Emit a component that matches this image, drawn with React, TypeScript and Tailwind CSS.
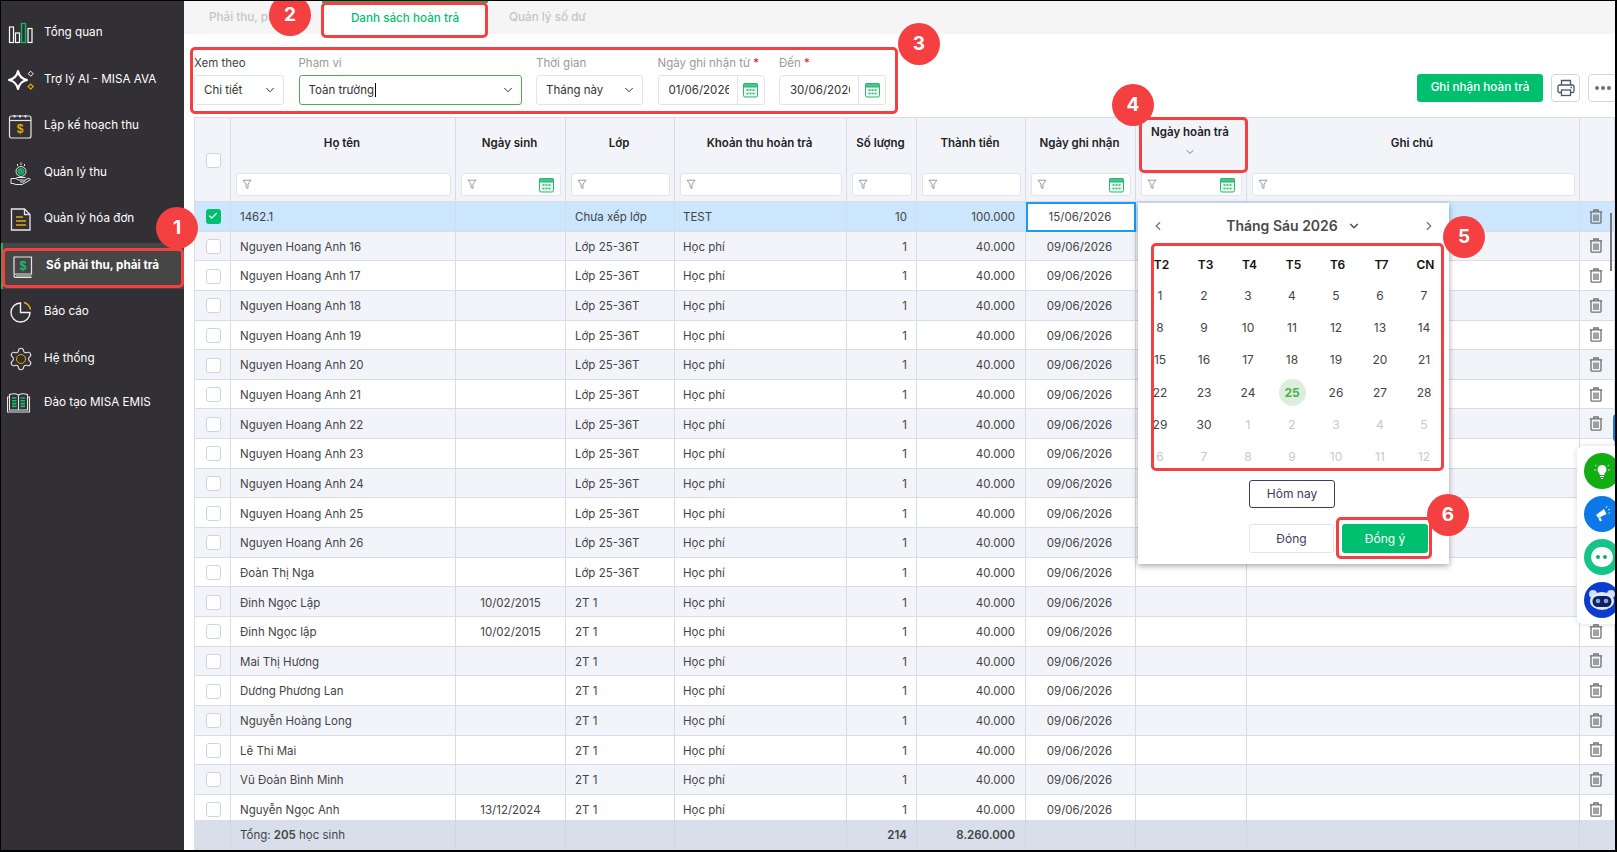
import { Check, ChevronDown, ChevronLeft, ChevronRight, Settings } from 'lucide-react';

const COLS = 'grid grid-cols-[36px_225px_110px_109px_172px_70px_109px_110px_111px_333px_35px]';
const CELL = 'border-r border-b border-[#d8dbe8] flex items-center min-w-0 overflow-hidden whitespace-nowrap';

const names16 = [16, 17, 18, 19, 20, 21, 22, 23, 24, 25, 26].map((n) => ({
  name: `Nguyen Hoang Anh ${n}`, dob: '', cls: 'Lớp 25-36T',
}));

const ROWS = [
  ...names16,
  { name: 'Đoàn Thị Nga', dob: '', cls: 'Lớp 25-36T' },
  { name: 'Đinh Ngọc Lập', dob: '10/02/2015', cls: '2T 1' },
  { name: 'Đinh Ngọc lập', dob: '10/02/2015', cls: '2T 1' },
  { name: 'Mai Thị Hương', dob: '', cls: '2T 1' },
  { name: 'Dương Phương Lan', dob: '', cls: '2T 1' },
  { name: 'Nguyễn Hoàng Long', dob: '', cls: '2T 1' },
  { name: 'Lê Thi Mai', dob: '', cls: '2T 1' },
  { name: 'Vũ Đoàn Bình Minh', dob: '', cls: '2T 1' },
  { name: 'Nguyễn Ngọc Anh', dob: '13/12/2024', cls: '2T 1' },
];

const CalIcon = () => (
  <svg width="17" height="16" viewBox="0 0 17 16" fill="none" stroke="#2bb673" strokeWidth="1">
    <rect x="1.5" y="1.5" width="14" height="13.5" rx="1.5" fill="#e9f8f0" />
    <rect x="1.5" y="1.5" width="14" height="3.5" rx="1" fill="#4cc48a" />
    <path d="M4.5 8h2M7.5 8h2M10.5 8h2M4.500 11.500h2M7.500 11.500h2M10.500 11.500h2" strokeWidth="1.300" />
  </svg>
);

const Funnel = () => (
  <svg width="10" height="11" viewBox="0 0 10 11" fill="none" stroke="#8a8f99" strokeWidth="0.9" className="shrink-0">
    <path d="M1 1.2h8L6 5v4.5L4 8.3V5z" />
  </svg>
);

const Trash = () => (
  <svg width="14" height="15" viewBox="0 0 14 15" fill="none" stroke="#707070" strokeWidth="1.300">
    <path d="M0.8 2.8h12.400M4.800 2.600V1h4.400v1.600" />
    <path d="M2 2.800v10.400a1 1 0 0 0 1 1h8a1 1 0 0 0 1-1V2.800" />
    <path d="M5 5.500v6.500M7 5.500v6.500M9 5.500v6.500" />
  </svg>
);

const FilterBox = ({ cal }: { cal?: boolean }) => (
  <div className="h-[23px] w-full bg-white border border-[#e2e4ec] rounded-[3px] flex items-center justify-between pl-[5px] pr-[5px]">
    <Funnel />
    {cal && <CalIcon />}
  </div>
);

const Field = ({ label, req, w, children, muted }: { label: string; req?: boolean; w: string; children: React.ReactNode; muted?: boolean }) => (
  <div className={`${w} shrink-0 flex flex-col`}>
    <div className={`text-[11.5px] leading-[16px] mb-[4px] whitespace-nowrap ${muted ? 'text-[#9a9a9a]' : 'text-[#444]'}`}>
      {label}{req && <span className="text-[#e02020]"> *</span>}
    </div>
    {children}
  </div>
);

const SelectBox = ({ text, green, caret }: { text: string; green?: boolean; caret?: boolean }) => (
  <div className={`h-[30px] rounded-[3px] border bg-white flex items-center justify-between pl-[9px] pr-[6px] ${green ? 'border-[#4caf50]' : 'border-[#e2e4ec]'}`}>
    <span className="text-[11.5px] text-[#333] whitespace-nowrap pt-px">{text}{caret && <span className="border-l border-black ml-px" />}</span>
    <ChevronDown size={14} strokeWidth={1.7} className="text-[#333]" />
  </div>
);

const DateBox = ({ text }: { text: string }) => (
  <div className="h-[30px] rounded-[3px] border border-[#e2e4ec] bg-white flex items-center">
    <span className="flex-1 min-w-0 overflow-hidden ml-[10px] mr-[8px] pt-px text-[11.5px] text-[#333] whitespace-nowrap">{text}</span>
    <div className="w-[27px] h-full border-l border-[#e2e4ec] flex items-center justify-center shrink-0"><CalIcon /></div>
  </div>
);

const Bars = () => (
  <svg width="30" height="30" viewBox="0 0 30 30" fill="none" stroke="#fff" strokeWidth="1.200">
    <rect x="2.500" y="9" width="4" height="15.500" />
    <rect x="8.500" y="15" width="4" height="9.500" />
    <rect x="14.500" y="5.500" width="4" height="19" stroke="#18b26b" strokeWidth="1.400" />
    <rect x="21" y="10.500" width="4" height="14" />
  </svg>
);

const Spark = () => (
  <svg width="30" height="30" viewBox="0 0 30 30" fill="none">
    <path d="M11 6c1 5 3.500 7.700 9 9-5.500 1.300-8 4-9 9-1-5-3.500-7.700-9-9 5.500-1.300 8-4 9-9z" stroke="#fff" strokeWidth="2.200" strokeLinejoin="round" />
    <path d="M23.700 6.200l2.500 2.500-2.500 2.500-2.500-2.500z" stroke="#fff" strokeWidth="1" />
    <path d="M23.700 19.100l2.500 2.500-2.500 2.500-2.500-2.500z" stroke="#e0a800" strokeWidth="1.300" />
  </svg>
);

const PlanCal = () => (
  <svg width="30" height="30" viewBox="0 0 30 30" fill="none" stroke="#e6e6e6" strokeWidth="1.200">
    <rect x="2.500" y="5" width="21.500" height="22" rx="2" />
    <path d="M2.500 9.500h21.500" />
    <path d="M7.500 4v2.500M13 4v2.500M18.500 4v2.500" strokeWidth="1.800" />
    <text x="13.200" y="22" fontSize="12" fontWeight="700" fill="#e5ac00" stroke="none" textAnchor="middle" fontFamily="Liberation Sans, sans-serif">$</text>
  </svg>
);

const HandCoin = () => (
  <svg width="30" height="30" viewBox="0 0 30 30" fill="none" stroke="#e6e6e6" strokeWidth="1">
    <circle cx="14" cy="13.500" r="5" />
    <circle cx="14" cy="13.500" r="3.600" fill="#18a564" stroke="none" />
    <path d="M14 4.500v2.500M10.500 6v2M17.500 6v2" />
    <path d="M4 20.500h5l2.500 1.500h5c1.200 0 1.200 2 0 2h-3.500M4 20.500v5h2l3 1h6l8-4.500c1-1-0.500-2-2-1.500l-4 2" />
    <path d="M9.500 19.500h9" />
  </svg>
);

const Doc = () => (
  <svg width="30" height="30" viewBox="0 0 30 30" fill="none" stroke="#e6e6e6" strokeWidth="1.300">
    <path d="M4.500 5h13l5.500 5.500v15.500H4.500z" />
    <path d="M17.500 5v5.500h5.500" />
    <path d="M9 13h7M9 17h10M9 21h10" stroke="#e5ac00" strokeWidth="1.400" />
  </svg>
);

const Ledger = () => (
  <svg width="30" height="30" viewBox="0 0 30 30" fill="none" stroke="#e6e6e6" strokeWidth="1.200">
    <path d="M5 23V6h17.500v17H7c-2.700 0-2.700 3.500 0 3.500h15.500" />
    <path d="M7 25h15.500" strokeWidth="1" />
    <text x="14" y="19" fontSize="12" fontWeight="700" fill="#16c172" stroke="none" textAnchor="middle" fontFamily="Liberation Sans, sans-serif">$</text>
  </svg>
);

const Pie = () => (
  <svg width="30" height="30" viewBox="0 0 30 30" fill="none" stroke="#f0f0f0" strokeWidth="1.400">
    <path d="M13.500 6a9.500 9.500 0 1 0 9.500 9.500h-9.500z" />
    <path d="M17 5.500a9.500 9.500 0 0 1 6.500 7" stroke="#e5ac00" strokeWidth="1.400" />
  </svg>
);

const Gear = () => (
  <div className="relative w-[30px] h-[30px] -ml-[1px] flex items-center justify-center">
    <Settings size={26} strokeWidth={1} className="text-[#e6e6e6]" />
    <span className="absolute w-[10px] h-[10px] rounded-full border-[1.5px] border-[#e5ac00] bg-[#323034]" />
  </div>
);

const OpenBook = () => (
  <svg width="30" height="30" viewBox="0 0 30 30" fill="none" stroke="#e6e6e6" strokeWidth="1.100">
    <path d="M2.500 6.500c3-1 6.500-1 9 0.500 2.500-1.500 6-1.500 9-0.500v15.500h-18zM11.500 7v15M2.500 9H0.500v15h22V9h-2" />
    <path d="M5 10h4.500M5 12.800h4.500M5 15.600h4.500M5 18.400h4.500M13.500 10h4.500M13.500 12.800h4.500M13.500 15.600h4.500M13.500 18.400h4.500" stroke="#16c172" strokeWidth="1.600" />
  </svg>
);

const NAV = [
  { t: 'Tổng quan', i: <Bars /> },
  { t: 'Trợ lý AI - MISA AVA', i: <Spark /> },
  { t: 'Lập kế hoạch thu', i: <PlanCal /> },
  { t: 'Quản lý thu', i: <HandCoin /> },
  { t: 'Quản lý hóa đơn', i: <Doc /> },
  { t: 'Sổ phải thu, phải trả', i: <Ledger />, active: true },
  { t: 'Báo cáo', i: <Pie /> },
  { t: 'Hệ thống', i: <Gear /> },
  { t: 'Đào tạo MISA EMIS', i: <OpenBook /> },
];

const Circle = ({ n, pos }: { n: number; pos: string }) => (
  <div className={`absolute w-[42px] h-[42px] rounded-full bg-[#f44040] text-white font-bold text-[19px] flex items-center justify-center z-30 ${pos}`}>{n}</div>
);

const Frame = ({ pos }: { pos: string }) => (
  <div className={`absolute border-[3.5px] border-[#f44040] rounded-[5px] z-20 pointer-events-none ${pos}`} />
);

const WEEK = ['T2', 'T3', 'T4', 'T5', 'T6', 'T7', 'CN'];
const DAYS: { d: number; off?: boolean }[] = [
  ...Array.from({ length: 30 }, (_, i) => ({ d: i + 1 })),
  ...Array.from({ length: 12 }, (_, i) => ({ d: i + 1, off: true })),
];

const Popover = () => (
  <div className="absolute left-[1137px] top-[202px] w-[311px] h-[361px] bg-white shadow-[0_2px_6px_rgba(0,0,0,0.35)] z-10 flex flex-col">
    <div className="h-[45px] mb-px flex items-center justify-between pl-[13px] pr-[13px] shrink-0">
      <ChevronLeft size={14} className="text-[#6b7280]" />
      <div className="flex items-center gap-[9px] text-[14px] font-semibold text-[#4a4a4a]">
        Tháng Sáu 2026
        <ChevronDown size={14} className="text-[#3d3b5f]" />
      </div>
      <ChevronRight size={14} className="text-[#6b7280]" />
    </div>
    <div className="grid grid-cols-7 pr-[3px]">
      {WEEK.map((w) => (
        <div key={w} className="h-[31px] flex items-center justify-center text-[12px] font-semibold text-[#111] pl-[3px]">{w}</div>
      ))}
      {DAYS.map((x, i) => (
        <div key={i} className="h-[32.2px] flex items-center justify-center">
          <span className={`text-[12px] w-[27px] h-[27px] rounded-full flex items-center justify-center ${x.off ? 'text-[#c9c9c9]' : x.d === 25 ? 'bg-[#dcefdc] text-[#4caf50] font-bold' : 'text-[#444]'}`}>{x.d}</span>
        </div>
      ))}
    </div>
    <div className="flex justify-center pr-[3px] mt-[7px]">
      <div className="w-[86px] h-[28px] rounded-[3px] border border-[#3d3b5f] text-[12px] text-[#3d3b5f] flex items-center justify-center">Hôm nay</div>
    </div>
    <div className="flex justify-end gap-[8px] pr-[21px] mt-[16px]">
      <div className="w-[85px] h-[29px] rounded-[3px] border border-[#e2e4ec] text-[12px] text-[#3d3b5f] flex items-center justify-center -ml-px">Đóng</div>
      <div className="w-[86px] h-[29px] rounded-[3px] bg-[#00bf6f] text-[12px] text-white flex items-center justify-center">Đồng ý</div>
    </div>
  </div>
);

const Widgets = () => (
  <>
    <div className="absolute left-[1612px] top-[413px] w-[4px] h-[28px] bg-[#1577e8] rounded-l-[4px] z-10" />
    <div className="absolute left-[1576px] top-[445px] w-[41px] h-[178px] bg-white rounded-l-[6px] shadow-[0_0_6px_rgba(0,0,0,0.15)] z-10 flex flex-col items-start gap-[7px] pt-[7px] pl-[6.5px]">
      <div className="w-[36px] h-[36px] rounded-full bg-[#12ad12] flex items-center justify-center">
        <svg width="20" height="20" viewBox="0 0 20 20" fill="#fff">
          <path d="M10 4a4.500 4.500 0 0 0-2.500 8.200V14h5v-1.800A4.500 4.500 0 0 0 10 4zM8 15h4v1H8zM9 17h2v1H9z" />
          <path d="M3 4l1.500 1M17 4l-1.500 1M2 9h2M16 9h2" stroke="#fff" strokeWidth="0.800" />
        </svg>
      </div>
      <div className="w-[36px] h-[36px] rounded-full bg-[#0d78e8] flex items-center justify-center">
        <svg width="20" height="20" viewBox="0 0 20 20" fill="#fff">
          <path d="M4 11l8-6 2.500 5-8 4zM6.500 14.500l2-1 1.500 3-2 1z" />
          <path d="M14 4l1-2M16 6l2-1M16.500 9h1.500" stroke="#fff" strokeWidth="0.800" />
        </svg>
      </div>
      <div className="w-[36px] h-[36px] rounded-full bg-[#14c488] flex items-center justify-center">
        <div className="w-[22px] h-[20px] rounded-full bg-white flex items-center justify-center gap-[3px]">
          <span className="w-[4px] h-[4px] rounded-full bg-[#14a878]" />
          <span className="w-[4px] h-[4px] rounded-full bg-[#14a878]" />
        </div>
      </div>
      <div className="w-[36px] h-[36px] rounded-full bg-[#0a3ccf] flex items-center justify-center">
        <svg width="28" height="24" viewBox="0 0 28 24">
          <circle cx="5" cy="6" r="4" fill="#cfe0fa" />
          <circle cx="23" cy="6" r="4" fill="#cfe0fa" />
          <ellipse cx="14" cy="13" rx="12" ry="9" fill="#dfe9fb" />
          <rect x="4.500" y="8" width="19" height="11" rx="5.500" fill="#14205e" />
          <circle cx="10" cy="13" r="2.300" fill="#7fa8ee" />
          <circle cx="18" cy="13" r="2.300" fill="#7fa8ee" />
        </svg>
      </div>
    </div>
  </>
);

export default function App() {
  return (
    <div className="relative w-[1617px] h-[852px] overflow-hidden bg-white flex border-l border-t border-black border-r-2 border-b-2 text-[#333] font-['Inter','Noto_Sans',sans-serif]">
      <aside className="w-[183px] shrink-0 bg-[#323034] flex flex-col pt-[9px]">
        {NAV.map((n) => (
          <div key={n.t} className={`h-[46.5px] last:h-[44.5px] last:-mt-px flex items-center gap-[7px] pl-[6px] shrink-0 ${n.active ? 'bg-[#464646] border-l-2 border-[#19b56f] pl-[4px]' : ''}`}>
            <span className="w-[30px] h-[30px] shrink-0">{n.i}</span>
            <span className={`text-[11.7px] text-white whitespace-nowrap ${n.active ? 'font-bold' : ''}`}>{n.t}</span>
          </div>
        ))}
      </aside>

      <main className="flex-1 min-w-0 flex flex-col">
        <div className="h-[33px] shrink-0 bg-[#f5f5f5] flex text-[11.7px] font-medium">
          <div className="w-[138px] pl-[25px] flex items-center text-[#c4c4c4] whitespace-nowrap overflow-hidden">Phải thu, phải trả</div>
          <div className="w-[166px] bg-white border-t-2 border-[#00bf6f] flex items-center justify-center text-[#00bf6f]">Danh sách hoàn trả</div>
          <div className="pl-[21px] flex items-center text-[#c4c4c4]">Quản lý số dư</div>
        </div>

        <div className="h-[83px] shrink-0 flex items-end justify-between pl-[10px] pb-[12px]">
          <div className="flex gap-[14.500px] items-end">
            <Field label="Xem theo" w="w-[90px]"><SelectBox text="Chi tiết" /></Field>
            <Field label="Phạm vi" w="w-[223px]" muted><SelectBox text="Toàn trường" green caret /></Field>
            <Field label="Thời gian" w="w-[107px]" muted><SelectBox text="Tháng này" /></Field>
            <Field label="Ngày ghi nhận từ" req w="w-[107px]" muted><DateBox text="01/06/2026" /></Field>
            <Field label="Đến" req w="w-[107px]" muted><DateBox text="30/06/2026" /></Field>
          </div>
          <div className="flex items-center gap-[8px] mb-[3px] -mr-[2px]">
            <div className="w-[126px] h-[28px] bg-[#00bf6f] rounded-[3px] text-white text-[11.7px] font-medium flex items-center justify-center">Ghi nhận hoàn trả</div>
            <div className="w-[29px] h-[28px] border border-[#d5d5d5] rounded-[4px] flex items-center justify-center">
              <svg width="18" height="18" viewBox="0 0 18 18" fill="none" stroke="#4b5563" strokeWidth="1.300">
                <path d="M4.500 6V1.500h9V6" />
                <rect x="1" y="6" width="16" height="7.500" rx="1.500" />
                <rect x="4.500" y="11" width="9" height="5.500" fill="#fff" />
                <path d="M13.500 8.500h1.500" />
              </svg>
            </div>
            <div className="w-[29px] h-[28px] border border-[#d5d5d5] rounded-[4px] flex items-center justify-center gap-[2px]">
              <span className="w-[4px] h-[4px] rounded-full bg-[#6b7280]" />
              <span className="w-[4px] h-[4px] rounded-full bg-[#6b7280]" />
              <span className="w-[4px] h-[4px] rounded-full bg-[#6b7280]" />
            </div>
          </div>
        </div>

        <div className="flex-1 min-h-0 flex flex-col pl-[10px]">
          <div className={`${COLS} h-[85px] shrink-0 bg-[#f3f4f9] border-t border-l border-[#d8dbe8] text-[11.5px] font-semibold text-[#222]`}>
            <div className={`${CELL} justify-center pt-[2px] pl-px`}><span className="w-[15px] h-[15px] rounded-[3px] bg-white border border-[#cfd3dc]" /></div>
            {[
              { t: 'Họ tên' }, { t: 'Ngày sinh', cal: true }, { t: 'Lớp' }, { t: 'Khoản thu hoàn trả' }, { t: 'Số lượng' },
              { t: 'Thành tiền' }, { t: 'Ngày ghi nhận', cal: true }, { t: 'Ngày hoàn trả', cal: true, sort: true }, { t: 'Ghi chú' },
            ].map((c) => (
              <div key={c.t} className={`${CELL} flex-col !items-stretch pl-[5px] pr-[4px] pb-[5px]`}>
                <div className={`flex-1 flex flex-col items-center justify-center text-center min-h-0 pr-[3px] ${c.sort ? 'pb-[9px]' : 'pb-[3px]'}`}>
                  <span>{c.t}</span>
                  {c.sort && <ChevronDown size={12} strokeWidth={1.500} className="text-[#555] mt-[4px]" />}
                </div>
                <FilterBox cal={c.cal} />
              </div>
            ))}
            <div className={CELL} />
          </div>

          <div className="flex-1 min-h-0 overflow-hidden border-l border-[#d8dbe8] text-[11.5px] text-[#444]">
            <div className={`${COLS} h-[29.650px] bg-[#cbe6fd]`}>
              <div className={`${CELL} justify-center pl-px`}>
                <span className="w-[15px] h-[15px] rounded-[3px] bg-[#00bf6f] flex items-center justify-center"><Check size={10} strokeWidth={3} className="text-white" /></span>
              </div>
              <div className={`${CELL} pt-[3px] px-[9px]`}>1462.1</div>
              <div className={CELL} />
              <div className={`${CELL} pt-[3px] px-[9px]`}>Chưa xếp lớp</div>
              <div className={`${CELL} pt-[3px] px-[8px]`}>TEST</div>
              <div className={`${CELL} pt-[3px] justify-end px-[9px]`}>10</div>
              <div className={`${CELL} pt-[3px] justify-end px-[10px]`}>100.000</div>
              <div className="bg-white border-2 border-[#1a9cf0] pt-px pr-[2px] flex items-center justify-center">15/06/2026</div>
              <div className={CELL} />
              <div className={CELL} />
              <div className={`${CELL} justify-center pr-[2px]`}><Trash /></div>
            </div>
            {ROWS.map((r, i) => (
              <div key={i} className={`${COLS} h-[29.650px] ${i % 2 === 0 ? 'bg-[#f3f4f9]' : 'bg-white'}`}>
                <div className={`${CELL} justify-center pt-px pl-px`}><span className="w-[15px] h-[15px] rounded-[3px] bg-white border border-[#cfd3dc]" /></div>
                <div className={`${CELL} pt-[3px] px-[9px]`}>{r.name}</div>
                <div className={`${CELL} pt-[3px] justify-center`}>{r.dob}</div>
                <div className={`${CELL} pt-[3px] px-[9px]`}>{r.cls}</div>
                <div className={`${CELL} pt-[3px] px-[8px]`}>Học phí</div>
                <div className={`${CELL} pt-[3px] justify-end px-[9px]`}>1</div>
                <div className={`${CELL} pt-[3px] justify-end px-[10px]`}>40.000</div>
                <div className={`${CELL} pt-[3px] justify-center pr-[2px]`}>09/06/2026</div>
                <div className={CELL} />
                <div className={CELL} />
                <div className={`${CELL} justify-center pr-[2px]`}><Trash /></div>
              </div>
            ))}
          </div>

          <div className={`${COLS} h-[30px] shrink-0 bg-[#d8dfeb] border-l border-[#d8dfeb] text-[11.5px] text-[#444]`}>
            <div className="border-r border-[#cdd4e2]" />
            <div className="border-r border-[#cdd4e2] px-[9px] pt-px flex items-center whitespace-nowrap"><span>Tổng: <b className="font-semibold">205</b> học sinh</span></div>
            <div className="border-r border-[#cdd4e2]" />
            <div className="border-r border-[#cdd4e2]" />
            <div className="border-r border-[#cdd4e2]" />
            <div className="border-r border-[#cdd4e2] px-[9px] pt-px flex items-center justify-end font-semibold">214</div>
            <div className="border-r border-[#cdd4e2] px-[10px] pt-px flex items-center justify-end font-semibold">8.260.000</div>
            <div className="border-r border-[#cdd4e2]" />
            <div className="border-r border-[#cdd4e2]" />
            <div className="border-r border-[#cdd4e2]" />
            <div />
          </div>
        </div>
      </main>

      <div className="absolute left-[1609px] top-[212px] w-[2px] h-[58px] bg-[#777] z-[5]" />
      <Popover />
      <Widgets />

      <Frame pos="left-[1px] top-[247px] w-[182px] h-[40px]" />
      <Frame pos="left-[320px] top-[1px] w-[167px] h-[36px]" />
      <Frame pos="left-[189px] top-[46px] w-[708px] h-[67px]" />
      <Frame pos="left-[1138px] top-[116px] w-[109px] h-[56px]" />
      <Frame pos="left-[1150px] top-[242px] w-[293px] h-[228px]" />
      <Frame pos="left-[1335px] top-[516px] w-[96px] h-[42px]" />

      <Circle n={1} pos="left-[155px] top-[206px]" />
      <Circle n={2} pos="left-[268px] top-[-7px]" />
      <Circle n={3} pos="left-[897px] top-[22px]" />
      <Circle n={4} pos="left-[1111px] top-[83px]" />
      <Circle n={5} pos="left-[1442px] top-[215px]" />
      <Circle n={6} pos="left-[1426px] top-[493px]" />
    </div>
  );
}
